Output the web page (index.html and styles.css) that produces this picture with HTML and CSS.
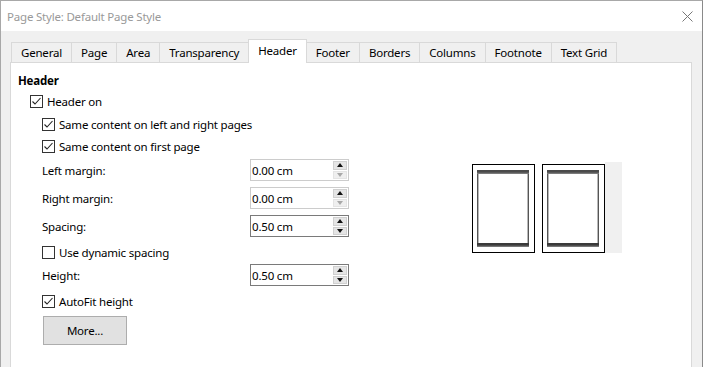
FILE: index.html
```html
<!DOCTYPE html>
<html>
<head>
<meta charset="utf-8">
<link rel="stylesheet" href="styles.css">
</head>
<body>
<div class="window">
  <div class="titlebar">
    <span class="title">Page Style: Default Page Style</span>
    <svg class="close" width="11" height="11" viewBox="0 0 11 11"><path d="M0.5 0.5 L10.5 10.5 M10.5 0.5 L0.5 10.5" stroke="#777" stroke-width="1" fill="none"/></svg>
  </div>
  <div class="client">
    <div class="tabs">
      <div class="tab">General</div>
      <div class="tab">Page</div>
      <div class="tab">Area</div>
      <div class="tab">Transparency</div>
      <div class="tab active">Header</div>
      <div class="tab">Footer</div>
      <div class="tab">Borders</div>
      <div class="tab">Columns</div>
      <div class="tab">Footnote</div>
      <div class="tab">Text Grid</div>
    </div>
    <div class="panel">
      <div class="form">
        <div class="row r-head heading">Header</div>
        <div class="row r-on lvl1 chk">
          <svg class="box" width="13" height="13" viewBox="0 0 13 13"><rect x="0.5" y="0.5" width="12" height="12" fill="#fff" stroke="#333"/><path d="M2.5 6.5 L5 9 L10.5 3" stroke="#222" stroke-width="1.1" fill="none"/></svg>
          <span>Header on</span>
        </div>
        <div class="row r-lr lvl2 chk">
          <svg class="box" width="13" height="13" viewBox="0 0 13 13"><rect x="0.5" y="0.5" width="12" height="12" fill="#fff" stroke="#333"/><path d="M2.5 6.5 L5 9 L10.5 3" stroke="#222" stroke-width="1.1" fill="none"/></svg>
          <span>Same content on left and right pages</span>
        </div>
        <div class="row r-first lvl2 chk">
          <svg class="box" width="13" height="13" viewBox="0 0 13 13"><rect x="0.5" y="0.5" width="12" height="12" fill="#fff" stroke="#333"/><path d="M2.5 6.5 L5 9 L10.5 3" stroke="#222" stroke-width="1.1" fill="none"/></svg>
          <span>Same content on first page</span>
        </div>
        <div class="row r-lm lvl2 field-row">
          <span class="lbl">Left margin:</span>
          <div class="spinfield disabled"><span class="val">0.00 cm</span><div class="spin"><div class="sbtn"><i class="up"></i></div><div class="sbtn off"><i class="down"></i></div></div></div>
        </div>
        <div class="row r-rm lvl2 field-row">
          <span class="lbl">Right margin:</span>
          <div class="spinfield disabled"><span class="val">0.00 cm</span><div class="spin"><div class="sbtn"><i class="up"></i></div><div class="sbtn off"><i class="down"></i></div></div></div>
        </div>
        <div class="row r-sp lvl2 field-row">
          <span class="lbl">Spacing:</span>
          <div class="spinfield"><span class="val">0.50 cm</span><div class="spin"><div class="sbtn"><i class="up"></i></div><div class="sbtn"><i class="down"></i></div></div></div>
        </div>
        <div class="row r-dyn lvl2 chk">
          <svg class="box" width="13" height="13" viewBox="0 0 13 13"><rect x="0.5" y="0.5" width="12" height="12" fill="#fff" stroke="#333"/></svg>
          <span>Use dynamic spacing</span>
        </div>
        <div class="row r-ht lvl2 field-row">
          <span class="lbl">Height:</span>
          <div class="spinfield"><span class="val">0.50 cm</span><div class="spin"><div class="sbtn"><i class="up"></i></div><div class="sbtn"><i class="down"></i></div></div></div>
        </div>
        <div class="row r-auto lvl2 chk">
          <svg class="box" width="13" height="13" viewBox="0 0 13 13"><rect x="0.5" y="0.5" width="12" height="12" fill="#fff" stroke="#333"/><path d="M2.5 6.5 L5 9 L10.5 3" stroke="#222" stroke-width="1.1" fill="none"/></svg>
          <span>AutoFit height</span>
        </div>
        <div class="r-btn">
          <div class="button">More...</div>
        </div>
      </div>
      <div class="preview">
        <div class="page"><div class="hbar"></div><div class="pbody"></div><div class="hbar"></div></div>
        <div class="page"><div class="hbar"></div><div class="pbody"></div><div class="hbar"></div></div>
        <div class="strip"></div>
      </div>
    </div>
  </div>
</div>
</body>
</html>
```

FILE: styles.css
```css
* { box-sizing: border-box; }
html, body { margin: 0; padding: 0; }
body {
  background: #f0f0f0;
  font-family: "Noto Sans", "Open Sans", sans-serif;
  font-size: 11.5px;
  letter-spacing: -0.2px;
  color: #000;
}
.window {
  width: 703px;
  height: 367px;
  border-top: 1px solid #a8a8a8;
  border-left: 1px solid #a8a8a8;
  border-right: 1px solid #8a8a8a;
  background: #f0f0f0;
  overflow: hidden;
  display: flex;
  flex-direction: column;
}
.titlebar {
  height: 30px;
  background: #fff;
  display: flex;
  align-items: center;
  padding-left: 6px;
  padding-right: 9px;
  flex: none;
}
.title {
  color: #999;
  flex: 1;
}
.client {
  flex: 1;
  padding: 8px 10px 0 9px;
  display: flex;
  flex-direction: column;
}
.tabs {
  display: flex;
  align-items: flex-end;
  margin-left: 1px;
  flex: none;
}
.tab {
  height: 20px;
  border: 1px solid #d9d9d9;
  border-bottom: none;
  margin-right: -1px;
  padding: 0 9px;
  display: flex;
  align-items: center;
  background: #f0f0f0;
}
.tab.active {
  height: 24px;
  margin-bottom: -1px;
  background: #fff;
  position: relative;
  padding-bottom: 3px;
  z-index: 1;
}
.panel {
  flex: 1;
  background: #fff;
  border: 1px solid #d9d9d9;
  border-bottom: none;
  display: flex;
}
.form {
  width: 461px;
  flex: none;
  padding: 7px 0 0 7px;
  display: flex;
  flex-direction: column;
}
.row {
  display: flex;
  align-items: center;
  height: 22px;
}
.heading { font-weight: bold; height: 20px; }
.lvl1 { padding-left: 12px; }
.lvl2 { padding-left: 24px; }
.chk .box { flex: none; margin-right: 4px; }
.r-lr { margin-top: 1px; }
.r-lm { margin-top: 2px; }
.r-rm { margin-top: 6px; }
.r-sp { margin-top: 6px; }
.r-dyn { margin-top: 4px; }
.r-ht { margin-top: 1px; }
.r-auto { margin-top: 4px; }
.r-btn { margin-top: 4px; padding-left: 25px; }
.lbl { width: 208px; flex: none; }
.spinfield {
  width: 99px;
  height: 22px;
  border: 1px solid #7a7a7a;
  display: flex;
  align-items: center;
  padding-left: 1px;
}
.spinfield.disabled { border-color: #cccccc; }
.val { flex: 1; }
.spin {
  width: 14px;
  height: 20px;
  margin-right: 1px;
  display: flex;
  flex-direction: column;
  gap: 1px;
  padding: 1px 0;
}
.sbtn {
  flex: 1;
  background: #e5e5e5;
  border: 1px solid #d0d0d0;
  display: flex;
  align-items: center;
  justify-content: center;
}
.sbtn.off { background: #efefef; border-color: #e4e4e4; }
.up, .down {
  width: 0; height: 0;
  border-left: 3.5px solid transparent;
  border-right: 3.5px solid transparent;
}
.up { border-bottom: 4px solid #111; }
.down { border-top: 4px solid #111; }
.sbtn.off .down { border-top-color: #a8a8a8; }
.button {
  width: 84px;
  height: 29px;
  background: #e1e1e1;
  border: 1px solid #adadad;
  display: flex;
  align-items: center;
  justify-content: center;
}
.preview {
  margin-top: 99px;
  height: 91px;
  display: flex;
  align-items: flex-start;
}
.page {
  width: 63px;
  height: 89px;
  margin-top: 2px;
  margin-right: 7px;
  border: 1px solid #000;
  background: #fff;
  padding: 5px 5px 5px 4px;
  display: flex;
  flex-direction: column;
}
.page + .page { margin-right: 0; }
.hbar {
  height: 4px;
  background: linear-gradient(#4a4a4a, #4a4a4a 50%, #8a8a8a);
  flex: none;
}
.hbar:last-child { background: linear-gradient(#3a3a3a, #3a3a3a 50%, #8a8a8a); }
.pbody {
  flex: 1;
  border-left: 1px solid #555;
  border-right: 1px solid #555;
  box-shadow: inset 1px 0 0 #b8b8b8, inset -1px 0 0 #b8b8b8;
}
.strip {
  width: 17px;
  height: 91px;
  background: #f0f0f0;
}
```
